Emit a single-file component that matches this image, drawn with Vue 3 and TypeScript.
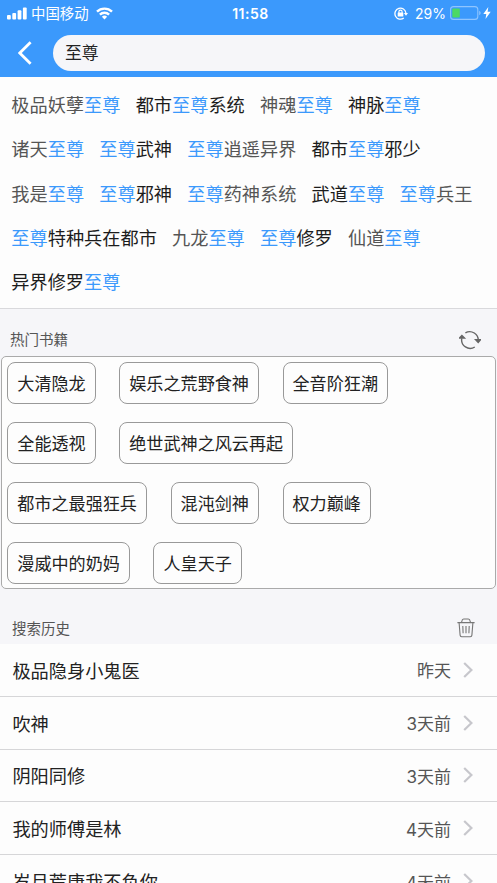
<template>
	<div class="page">
		<header class="header">
			<div class="status-bar">
				<div class="status-left">
					<svg class="signal" viewBox="0 0 20 13" fill="#fff">
						<rect x="0" y="8" width="3.8" height="4.5" rx="1" />
						<rect x="5.3" y="6" width="3.8" height="6.5" rx="1" />
						<rect x="10.6" y="3.3" width="3.8" height="9.2" rx="1" />
						<rect x="15.9" y="0.5" width="3.8" height="12" rx="1" />
					</svg>
					<span class="carrier">中国移动</span>
					<svg class="wifi" viewBox="0 0 17 13" fill="none" stroke="#fff" stroke-width="2.4">
						<path d="M1 4.7a10.6 10.6 0 0 1 15 0" />
						<path d="M3.9 7.7a6.5 6.5 0 0 1 9.2 0" />
						<path d="M8.5 12.4 5.9 9.8a3.7 3.7 0 0 1 5.2 0Z" fill="#fff" stroke="none" />
					</svg>
				</div>
				<span class="clock">11:58</span>
				<div class="status-right">
					<svg class="lock" viewBox="0 0 14 13" fill="none" stroke="#fff">
						<path d="M9.8 11A5.5 5.5 0 1 1 11.9 6" stroke-width="1.3" />
						<path d="M9.8 6H14L12 8.8Z" fill="#fff" stroke="none" />
						<rect x="3.7" y="5.5" width="5.6" height="4.1" rx="0.6" fill="#fff" stroke="none" />
						<path d="M4.9 6V4.7a1.6 1.6 0 0 1 3.2 0V6" stroke-width="1.1" />
					</svg>
					<span class="percent">29%</span>
					<svg class="battery" viewBox="0 0 32 14">
						<rect x="0.6" y="0.6" width="27.2" height="12.8" rx="3" fill="none" stroke="#8fc5ff" stroke-width="1.1" />
						<rect x="2.3" y="2.5" width="7.5" height="9" rx="0.8" fill="#4cd964" />
						<path d="M29.2 4.8c2 .8 2 3.6 0 4.4Z" fill="#8fc5ff" />
					</svg>
					<svg class="bolt" viewBox="0 0 8 12">
						<path d="M5.3 0 .3 6.9h3L2.5 12l5.2-7.2H4.6Z" fill="#fff" />
					</svg>
				</div>
			</div>
			<div class="search-bar">
				<svg class="back" viewBox="0 0 14 24">
					<path d="M12.6 1.2 1.8 12l10.8 10.8" fill="none" stroke="#fff" stroke-width="2.8" />
				</svg>
				<div class="search-input">{{ keyword }}</div>
			</div>
		</header>

		<section class="results">
			<div v-for="(row, i) in results" :key="i" class="result-row">
				<span
					v-for="item in row"
					:key="item.text"
					:class="['result', { dark: item.dark }]"
				><span
					v-for="(part, j) in splitKeyword(item.text)"
					:key="j"
					:class="{ keyword: part === keyword }">{{ part }}</span></span>
			</div>
		</section>

		<div class="section-title hot-title">
			<span>热门书籍</span>
			<svg class="refresh" viewBox="0 0 22 20" fill="none" stroke="#666" stroke-width="1.4">
				<path d="M6.4 2.9A8.5 8.5 0 0 1 19.2 11" />
				<path d="M16.6 9.6h5L19.2 12.4Z" fill="#666" />
				<path d="M15.8 17A8.5 8.5 0 0 1 2.8 8.3" />
				<path d="M.5 8h5L2.9 5.4Z" fill="#666" />
			</svg>
		</div>

		<section class="hot-books">
			<div v-for="(row, i) in hotBooks" :key="i" class="tag-row">
				<span v-for="book in row" :key="book" class="tag">{{ book }}</span>
			</div>
		</section>

		<div class="section-title history-title">
			<span>搜索历史</span>
			<svg class="trash" viewBox="0 0 18 20" fill="none" stroke="#777" stroke-width="1.1">
				<path d="M.4 4.6h17.2M4.5 4.4l.7-2.2Q5.5 1 6.8 1h4.4q1.3 0 1.6 1.2l.7 2.2" />
				<path d="M2.1 4.8l1 12.3q.1 1.6 1.6 1.6h8.6q1.5 0 1.6-1.6l1-12.3" />
				<path d="M5.8 8l.3 7.2M9 8v7.2M12.2 8l-.3 7.2" />
			</svg>
		</div>

		<ul class="history">
			<li v-for="item in history" :key="item.name" class="history-item">
				<span class="name">{{ item.name }}</span>
				<span class="time">{{ item.time }}</span>
				<svg class="arrow" viewBox="0 0 10 16">
					<path d="M1.2 1 8.4 8l-7.2 7" fill="none" stroke="#c7c7cc" stroke-width="2.2" />
				</svg>
			</li>
		</ul>
	</div>
</template>

<script setup lang="ts">
import { ref } from "vue";

interface Result {
	text: string;
	dark: boolean;
}

interface HistoryItem {
	name: string;
	time: string;
}

const keyword = ref("至尊");

const results: Result[][] = [
	[
		{ text: "极品妖孽至尊", dark: false },
		{ text: "都市至尊系统", dark: true },
		{ text: "神魂至尊", dark: false },
		{ text: "神脉至尊", dark: true },
	],
	[
		{ text: "诸天至尊", dark: false },
		{ text: "至尊武神", dark: true },
		{ text: "至尊逍遥异界", dark: false },
		{ text: "都市至尊邪少", dark: true },
	],
	[
		{ text: "我是至尊", dark: false },
		{ text: "至尊邪神", dark: true },
		{ text: "至尊药神系统", dark: false },
		{ text: "武道至尊", dark: true },
		{ text: "至尊兵王", dark: false },
	],
	[
		{ text: "至尊特种兵在都市", dark: true },
		{ text: "九龙至尊", dark: false },
		{ text: "至尊修罗", dark: true },
		{ text: "仙道至尊", dark: false },
	],
	[{ text: "异界修罗至尊", dark: true }],
];

const hotBooks: string[][] = [
	["大清隐龙", "娱乐之荒野食神", "全音阶狂潮"],
	["全能透视", "绝世武神之风云再起"],
	["都市之最强狂兵", "混沌剑神", "权力巅峰"],
	["漫威中的奶妈", "人皇天子"],
];

const history: HistoryItem[] = [
	{ name: "极品隐身小鬼医", time: "昨天" },
	{ name: "吹神", time: "3天前" },
	{ name: "阴阳同修", time: "3天前" },
	{ name: "我的师傅是林", time: "4天前" },
	{ name: "岁月荒唐我不负你", time: "4天前" },
];

// keeps the keyword as its own part so it can be highlighted
const splitKeyword = (text: string): string[] =>
	text.split(new RegExp(`(${keyword.value})`)).filter(Boolean);
</script>

<style>
body {
	background: #f6f6f9;
	overflow: hidden;
}
</style>

<style scoped>
.page {
	height: 883px;
	overflow: hidden;
	background: #f6f6f9;
	color: #222;
	font-family: Inter, "Noto Sans CJK SC", sans-serif;
	white-space: nowrap;
}

svg {
	display: block;
	flex: none;
}

.header {
	height: 77px;
	background: #3b99fc;
}

.status-bar {
	height: 26px;
	display: grid;
	grid-template-columns: 1fr auto 1fr;
	align-items: center;
	padding: 0 6px 0 7px;
	color: #fff;
}

.status-left,
.status-right {
	display: flex;
	align-items: center;
	height: 26px;
}

.status-right {
	justify-content: flex-end;
}

.signal {
	width: 20px;
	height: 13px;
}

.carrier {
	margin: 0 7px 0 4px;
	padding-top: 1px;
	font-size: 14.4px;
	line-height: 26px;
}

.wifi {
	width: 17px;
	height: 13px;
}

.clock {
	padding-left: 3px;
	font-size: 14px;
	font-weight: 600;
	letter-spacing: 0.5px;
}

.lock {
	width: 14px;
	height: 13px;
}

.percent {
	margin: 0 4px 0 7px;
	font-size: 14px;
}

.battery {
	width: 32px;
	height: 14px;
}

.bolt {
	width: 8px;
	height: 12px;
	margin-left: 1px;
}

.search-bar {
	display: flex;
	align-items: center;
	padding: 9px 12px 0 18px;
}

.back {
	width: 14px;
	height: 24px;
	margin-right: 21px;
}

.search-input {
	flex: 1;
	height: 36px;
	padding-left: 12px;
	border-radius: 18px;
	background: #f6f6f9;
	font-size: 16.8px;
	line-height: 36px;
}

.results {
	height: 220px;
	padding: 6px 11.3px 5px;
	border-bottom: 1px solid #d9d9dc;
	background: #fdfdfd;
}

.result-row {
	display: flex;
	gap: 15.2px;
	height: 44.3px;
	font-size: 18.2px;
	line-height: 44.3px;
}

.result {
	color: #555;
}

.result.dark {
	color: #1c1c1c;
}

.result .keyword {
	color: #3b99fc;
}

.section-title {
	display: flex;
	align-items: center;
	justify-content: space-between;
	color: #555;
	font-size: 14.5px;
}

.hot-title {
	height: 47px;
	padding: 0 16px 0 10px;
}

.hot-title span {
	padding-top: 11px;
}

.refresh {
	width: 22px;
	height: 20px;
	margin-top: 15px;
}

.hot-books {
	display: flex;
	flex-direction: column;
	gap: 18px;
	height: 233px;
	margin: 0 1px;
	padding: 5px 5.3px 0;
	box-sizing: border-box;
	border: 1px solid #aaa;
	border-radius: 5px;
	background: #fdfdfd;
}

.tag-row {
	display: flex;
	gap: 23.6px;
}

.tag {
	height: 42px;
	padding: 0 9px;
	box-sizing: border-box;
	border: 1px solid #999;
	border-radius: 8px;
	font-size: 17.1px;
	line-height: 42px;
}

.history-title {
	height: 55px;
	padding: 0 22px 0 12px;
}

.history-title span {
	padding-top: 21px;
}

.trash {
	width: 18px;
	height: 20px;
	margin-top: 22px;
}

.history {
	margin: 0;
	padding: 0;
	list-style: none;
}

.history-item {
	display: flex;
	align-items: center;
	height: 52.8px;
	padding: 0 24px 0 12.4px;
	box-sizing: border-box;
	border-bottom: 1px solid #d6d6d8;
	background: #fdfdfd;
}

.name {
	flex: 1;
	font-size: 18.2px;
}

.time {
	margin-right: 12px;
	color: #555;
	font-size: 17px;
}

.arrow {
	width: 10px;
	height: 16px;
}
</style>
